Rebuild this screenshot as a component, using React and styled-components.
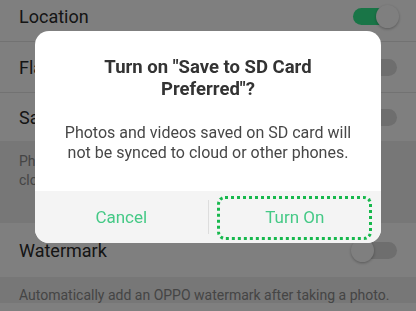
import React from "react";
import styled, { createGlobalStyle } from "styled-components";

const GlobalStyle = createGlobalStyle`
  html, body {
    margin: 0;
    padding: 0;
    background: #ffffff;
  }
  body {
    font-family: Roboto, "Noto Sans", "Liberation Sans", sans-serif;
    overflow: hidden;
  }
`;

const Page = styled.div`
  width: 416px;
  height: 311px;
  overflow: hidden;
  display: flex;
  flex-direction: column;
  margin-top: -8px;
`;

const Row = styled.div`
  display: flex;
  align-items: center;
  justify-content: space-between;
  height: ${(p) => p.$height || 51}px;
  flex-shrink: 0;
  padding: 0 19px;
  box-sizing: border-box;
  background: #ffffff;
  border-bottom: ${(p) => (p.$divider ? "1px solid #e4e4e4" : "none")};
`;

const Label = styled.span`
  font-size: 18px;
  color: #2a2a2a;
`;

const Note = styled.div`
  flex-shrink: 0;
  height: ${(p) => p.$height}px;
  box-sizing: border-box;
  padding: ${(p) => p.$pad || "11px 19px 0"};
  background: #eeeeee;
  font-size: 14px;
  line-height: 19px;
  color: #8a8a8a;
`;

const Track = styled.div`
  position: relative;
  width: 44px;
  height: 17px;
  border-radius: 9px;
  background: ${(p) => (p.$on ? "#33ea8f" : "#dcdcdc")};
`;

const Knob = styled.div`
  position: absolute;
  top: -3px;
  ${(p) => (p.$on ? "right: -2px;" : "left: -2px;")}
  width: 23px;
  height: 23px;
  border-radius: 50%;
  background: #ffffff;
  box-shadow: 0 1px 3px rgba(0, 0, 0, 0.3);
`;

const Toggle = ({ on }) => (
  <Track $on={on}>
    <Knob $on={on} />
  </Track>
);

const Overlay = styled.div`
  position: fixed;
  inset: 0;
  background: rgba(0, 0, 0, 0.5);
  display: flex;
  justify-content: center;
  align-items: flex-start;
  padding-top: 31px;
`;

const Dialog = styled.div`
  width: 346px;
  background: #ffffff;
  border-radius: 14px;
  overflow: hidden;
  display: flex;
  flex-direction: column;
`;

const Title = styled.h2`
  margin: 0;
  padding: 25px 20px 0;
  font-size: 18.5px;
  line-height: 22px;
  font-weight: 700;
  text-align: center;
  color: #333333;
`;

const Body = styled.p`
  margin: 0;
  padding: 23px 20px 28px;
  font-size: 16px;
  line-height: 20px;
  text-align: center;
  color: #474747;
`;

const Actions = styled.div`
  display: flex;
  align-items: center;
  height: 52px;
  background: #f4f4f4;
`;

const Action = styled.div`
  position: relative;
  flex: 1;
  height: 100%;
  display: flex;
  align-items: center;
  justify-content: center;
  font-size: 17px;
  color: #45c986;
`;

const Divider = styled.div`
  width: 1px;
  height: 34px;
  background: #dddddd;
`;

const Highlight = styled.div`
  position: absolute;
  left: 8px;
  top: 5px;
  right: 9px;
  bottom: 3px;
  border: 3px dotted #17b84d;
  border-radius: 8px;
`;

const App = () => (
  <>
    <GlobalStyle />
    <Page>
      <Row $height={50} $divider>
        <Label>Location</Label>
        <Toggle on />
      </Row>
      <Row $divider>
        <Label>Flash</Label>
        <Toggle />
      </Row>
      <Row $height={48}>
        <Label>Save to SD Card Preferred</Label>
        <Toggle />
      </Row>
      <Note $height={82}>
        Photos and videos saved on SD card will not be synced to
        cloud or other phones.
      </Note>
      <Row $height={54}>
        <Label>Watermark</Label>
        <Toggle />
      </Row>
      <Note $height={40} $pad="9px 19px 0">
        Automatically add an OPPO watermark after taking a photo.
      </Note>
    </Page>
    <Overlay>
      <Dialog>
        <Title>
          Turn on "Save to SD Card
          <br />
          Preferred"?
        </Title>
        <Body>
          Photos and videos saved on SD card will
          <br />
          not be synced to cloud or other phones.
        </Body>
        <Actions>
          <Action>Cancel</Action>
          <Divider />
          <Action>
            Turn On
            <Highlight />
          </Action>
        </Actions>
      </Dialog>
    </Overlay>
  </>
);

export default App;
